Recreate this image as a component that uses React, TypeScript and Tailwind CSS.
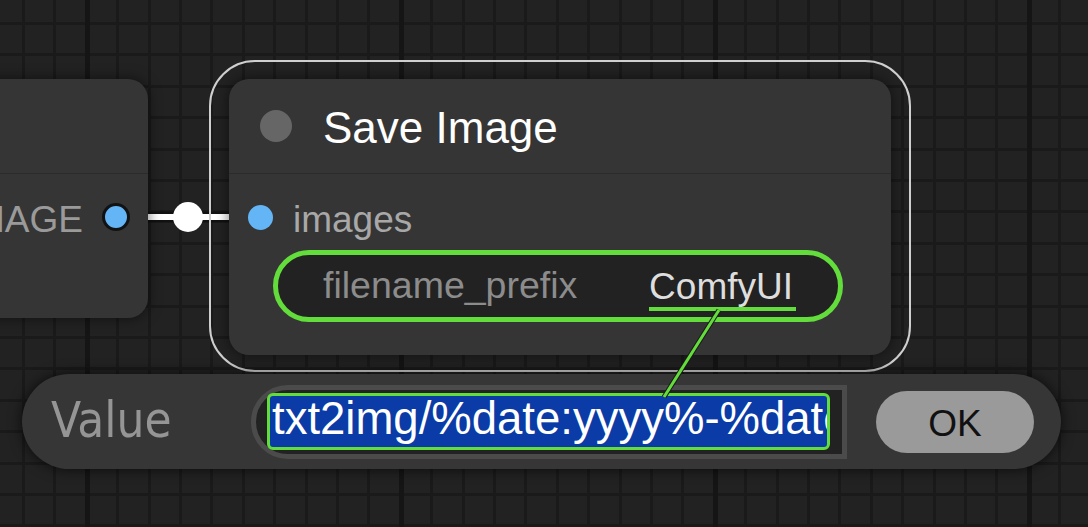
export default function App() {
  return (
    <div className="relative w-[1088px] h-[527px] overflow-hidden bg-[#222222] [background-image:repeating-linear-gradient(90deg,#151515_-229px,#151515_-224px,transparent_-224px,transparent_85px),repeating-linear-gradient(90deg,#1a1a1a_-9.4px,#1a1a1a_-6.4px,transparent_-6.4px,transparent_22px),repeating-linear-gradient(180deg,#1a1a1a_-9.4px,#1a1a1a_-6.4px,transparent_-6.4px,transparent_22px)] font-['Liberation_Sans',Arial,sans-serif]">
      {/* link between nodes */}
      <svg className="absolute left-0 top-0" width={1088} height={527}>
        <line x1={140} y1={217} x2={235} y2={217} stroke="#111" strokeWidth={11} />
        <line x1={140} y1={217} x2={235} y2={217} stroke="#ffffff" strokeWidth={6} />
        <circle cx={188} cy={217} r={15} fill="#ffffff" />
      </svg>

      {/* left node (partially off-canvas) */}
      <div className="absolute left-[-200px] top-[79px] w-[348px] h-[239px] rounded-[20px] bg-[#353535] shadow-[0_0_14px_rgba(0,0,0,0.55)] flex flex-col">
        <div className="h-[95px] border-b border-[#2b2b2b]" />
        <div className="mt-[19px] h-[48px] flex items-center justify-end gap-[19px] pr-[18px]">
          <span className="mt-[4px] text-[37px] leading-none text-[#9a9a9a] whitespace-nowrap">IMAGE</span>
          <span className="w-[28px] h-[28px] rounded-full bg-[#64b5f6] border-[3px] border-[#121212]" />
        </div>
      </div>

      {/* selection outline */}
      <div className="absolute left-[209px] top-[60px] w-[702px] h-[312px] rounded-[46px] border-2 border-[#cfcfcf]" />

      {/* Save Image node */}
      <div className="absolute left-[229px] top-[79px] w-[662px] h-[276px] rounded-[20px] bg-[#353535] shadow-[0_0_14px_rgba(0,0,0,0.55)] flex flex-col">
        <div className="h-[95px] border-b border-[#2b2b2b] flex items-center pl-[31px] gap-[31px]">
          <span className="w-[32px] h-[32px] rounded-full bg-[#666666]" />
          <span className="mt-[4px] text-[44px] leading-none text-white whitespace-nowrap">Save Image</span>
        </div>
        <div className="mt-[19px] h-[48px] flex items-center pl-[19px] gap-[20px]">
          <span className="w-[25px] h-[25px] rounded-full bg-[#64b5f6]" />
          <span className="mt-[4px] text-[37px] leading-none text-[#a8a8a8]">images</span>
        </div>
        <div className="mt-[9px] ml-[44px] w-[570px] h-[72px] rounded-full border-[5px] border-[#62dd3b] bg-[#222222] flex items-center justify-between pl-[45px] pr-[42px]">
          <span className="text-[37.5px] leading-none text-[#8c8c8c] whitespace-nowrap">filename_prefix</span>
          <span className="mt-[6px] pb-[2px] pr-[3px] border-b-4 border-[#62dd3b] text-[37px] leading-none text-[#dedede]">ComfyUI</span>
        </div>
      </div>

      {/* value dialog */}
      <div className="absolute left-[22px] top-[374px] w-[1039px] h-[95px] rounded-full bg-[#363636] shadow-[0_0_14px_rgba(0,0,0,0.7)] flex items-center pl-[29px] pr-[27px]">
        <span className="w-[200px] shrink-0 font-['DejaVu_Sans_Condensed','DejaVu_Sans',sans-serif] font-stretch-condensed text-[49px] leading-none text-[#959595] pb-[3px]">Value</span>
        <div className="w-[596px] h-[74px] shrink-0 rounded-l-[37px] border-[5px] border-[#4b4b4b] bg-[#222222] flex items-center pl-[11px] pr-[12px]">
          <div className="w-full h-[57px] rounded-[6px] border-[3px] border-[#62dd3b] bg-[#0a3ba6] overflow-hidden flex items-center pl-[2px] pb-[6px]">
            <span className="text-[45.5px] leading-none text-white whitespace-nowrap">txt2img/%date:yyyy%-%date:MM%-%date:dd%</span>
          </div>
        </div>
        <div className="ml-auto w-[158px] h-[62px] rounded-full bg-[#9a9a9a] flex items-center justify-center pt-[3px]">
          <span className="text-[37px] leading-none text-[#111111]">OK</span>
        </div>
      </div>

      {/* widget link to dialog */}
      <svg className="absolute left-0 top-0 pointer-events-none" width={1088} height={527}>
        <line x1={719} y1={310} x2={664} y2={397} stroke="#1a1a1a" strokeWidth={5} />
        <line x1={719} y1={310} x2={664} y2={397} stroke="#62dd3b" strokeWidth={3} />
      </svg>
    </div>
  );
}
